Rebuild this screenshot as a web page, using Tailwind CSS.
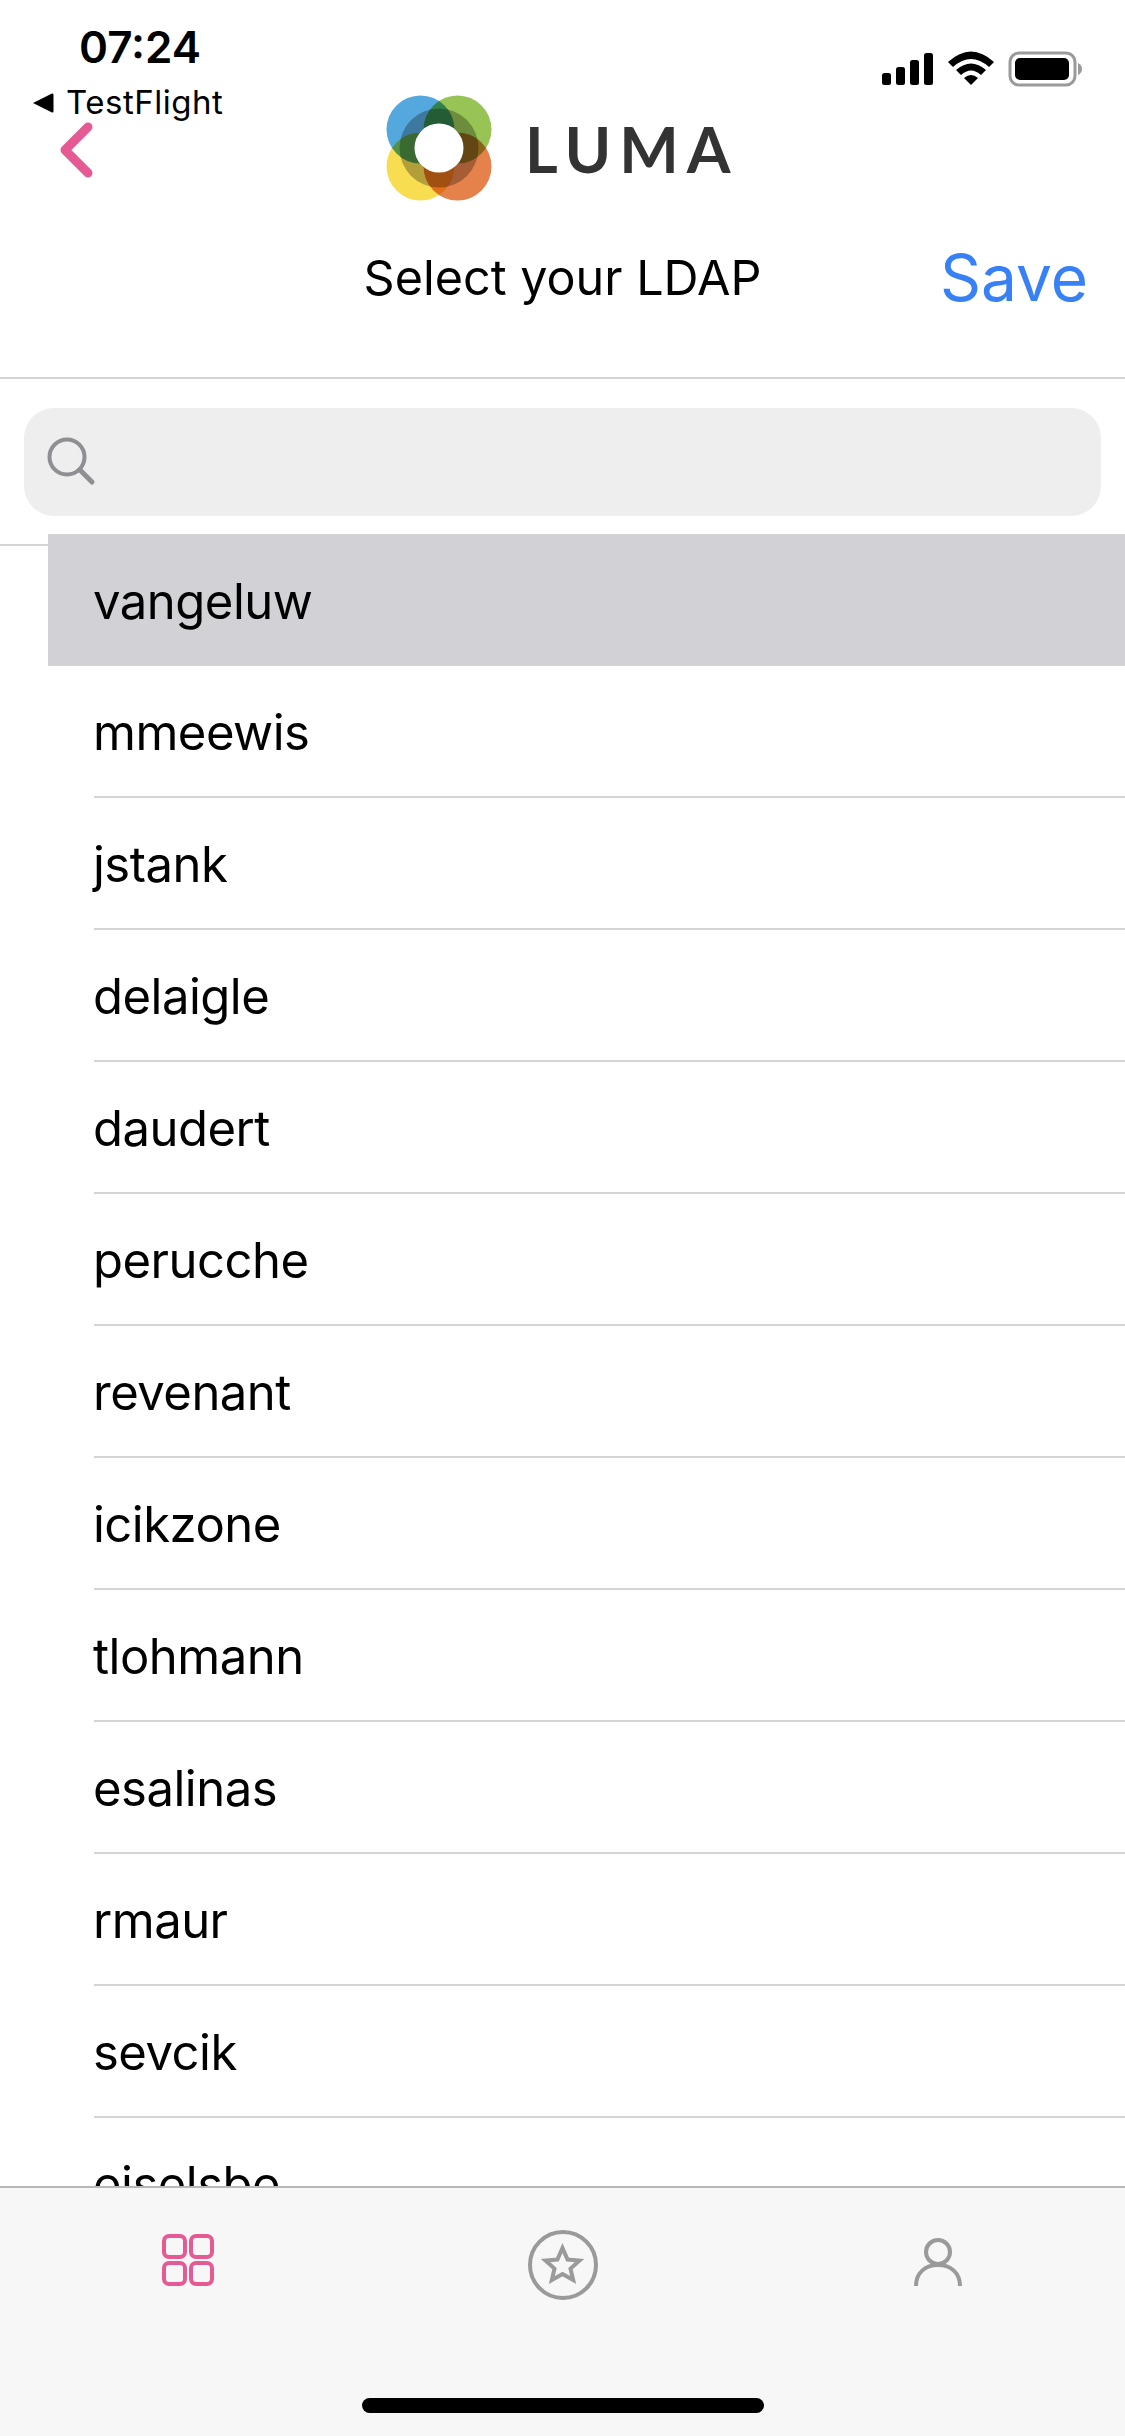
<!DOCTYPE html>
<html lang="en">
<head>
    <meta charset="UTF-8">
    <meta name="viewport" content="width=device-width, initial-scale=1.0">
    <title>Select your LDAP</title>
    <script src="https://cdn.jsdelivr.net/npm/@tailwindcss/browser@4"></script>
</head>
<body class="bg-white font-['Inter',sans-serif] text-black">
    <div class="relative w-[1125px] h-[2436px] flex flex-col overflow-hidden">

        <!-- status bar -->
        <div class="absolute top-0 left-0 w-full h-[120px]">
            <span class="absolute left-[79px] top-[20px] text-[44px] leading-[54px] font-semibold">07:24</span>
            <svg class="absolute left-[32px] top-[92px]" width="22" height="22" viewBox="0 0 22 22"><path d="M1 11 L20 1.5 Q21.5 1 21.5 3 V19 Q21.5 21 20 20.5 Z" fill="#000"/></svg>
            <span class="absolute left-[66px] top-[82px] text-[33px] leading-[40px] tracking-[0.5px]">TestFlight</span>
            <svg class="absolute left-[880px] top-[50px]" width="205" height="38" viewBox="880 50 205 38">
                <rect x="882" y="73" width="9" height="12" rx="2.5"/>
                <rect x="896" y="67" width="9" height="18" rx="2.5"/>
                <rect x="910" y="60" width="9" height="25" rx="2.5"/>
                <rect x="924" y="53" width="9" height="32" rx="2.5"/>
                <path d="M948 62 Q971 41 994 62 L989 67 Q971 51 953 67 Z"/>
                <path d="M956 70 Q971 57 986 70 L981 75 Q971 66 961 75 Z"/>
                <path d="M964 78 Q971 72 978 78 L971 85 Z"/>
                <rect x="1010" y="53" width="65" height="32" rx="9" fill="none" stroke="#9a9a9a" stroke-width="3"/>
                <rect x="1015" y="58" width="54" height="22" rx="5"/>
                <path d="M1078 63 Q1082 65 1082 69 Q1082 73 1078 75 Z" fill="#9a9a9a"/>
            </svg>
        </div>

        <!-- header -->
        <header class="relative h-[379px] shrink-0 border-b-2 border-[#d4d4d6]">
            <svg class="absolute left-[58px] top-[120px]" width="40" height="60" viewBox="58 120 40 60" fill="none"><path d="M88 127 L65 150 L88 173" stroke="#e55a93" stroke-width="9" stroke-linecap="round" stroke-linejoin="round"/></svg>
            <div class="pt-[94px] pl-[385px] flex items-center gap-[32px]">
                <svg width="108" height="108" viewBox="385.5 96 108 108" class="isolate shrink-0">
                    <circle cx="421" cy="131.5" r="34" fill="#55a8dd" class="mix-blend-multiply"/>
                    <circle cx="458" cy="131.5" r="34" fill="#97c455" class="mix-blend-multiply"/>
                    <circle cx="421" cy="168.5" r="34" fill="#f9dd50" class="mix-blend-multiply"/>
                    <circle cx="458" cy="168.5" r="34" fill="#e5814b" class="mix-blend-multiply"/>
                    <circle cx="439.5" cy="150" r="39.5" fill="#000" fill-opacity="0.28"/>
                    <circle cx="439.5" cy="150" r="24.5" fill="#fff"/>
                </svg>
                <span class="font-['Lato',sans-serif] font-bold text-[63px] leading-none tracking-[8px] text-[#333333]">LUMA</span>
            </div>
            <h1 class="absolute left-0 top-[246px] w-full text-center text-[48.5px] leading-[64px]">Select your LDAP</h1>
            <span class="absolute right-[37px] top-[238px] text-[64px] leading-[80px] text-[#3880f5]">Save</span>
        </header>

        <!-- search -->
        <div class="h-[167px] shrink-0 border-b-2 border-[#d4d4d6] px-[24px] pt-[29px]">
            <div class="h-[108px] rounded-[30px] bg-[#eeeeee] flex items-center pl-[22px]">
                <svg width="50" height="50" viewBox="0 0 50 50" fill="none" stroke="#8e8e93" stroke-width="4"><circle cx="21" cy="20" r="17.5"/><path d="M34 33 L46 45" stroke-width="5" stroke-linecap="round"/></svg>
            </div>
        </div>

        <!-- list -->
        <ul class="relative -mt-[12px] ml-[48px] flex-1 overflow-hidden text-[49px] tracking-[-0.5px] indent-[-1px]">
            <li class="pl-[46px] bg-[#d1d1d6]"><div class="h-[132px] pt-[3px] flex items-center">vangeluw</div></li>
            <li class="pl-[46px]"><div class="h-[132px] pt-[3px] flex items-center border-b-2 border-[#d4d4d6]">mmeewis</div></li>
            <li class="pl-[46px]"><div class="h-[132px] pt-[3px] flex items-center border-b-2 border-[#d4d4d6]">jstank</div></li>
            <li class="pl-[46px]"><div class="h-[132px] pt-[3px] flex items-center border-b-2 border-[#d4d4d6]">delaigle</div></li>
            <li class="pl-[46px]"><div class="h-[132px] pt-[3px] flex items-center border-b-2 border-[#d4d4d6]">daudert</div></li>
            <li class="pl-[46px]"><div class="h-[132px] pt-[3px] flex items-center border-b-2 border-[#d4d4d6]">perucche</div></li>
            <li class="pl-[46px]"><div class="h-[132px] pt-[3px] flex items-center border-b-2 border-[#d4d4d6]">revenant</div></li>
            <li class="pl-[46px]"><div class="h-[132px] pt-[3px] flex items-center border-b-2 border-[#d4d4d6]">icikzone</div></li>
            <li class="pl-[46px]"><div class="h-[132px] pt-[3px] flex items-center border-b-2 border-[#d4d4d6]">tlohmann</div></li>
            <li class="pl-[46px]"><div class="h-[132px] pt-[3px] flex items-center border-b-2 border-[#d4d4d6]">esalinas</div></li>
            <li class="pl-[46px]"><div class="h-[132px] pt-[3px] flex items-center border-b-2 border-[#d4d4d6]">rmaur</div></li>
            <li class="pl-[46px]"><div class="h-[132px] pt-[3px] flex items-center border-b-2 border-[#d4d4d6]">sevcik</div></li>
            <li class="pl-[46px]"><div class="h-[132px] pt-[3px] flex items-center border-b-2 border-[#d4d4d6]">eiselsbe</div></li>
        </ul>

        <!-- tab bar -->
        <nav class="relative h-[250px] shrink-0 border-t-2 border-[#b8b8b8] bg-[#f7f7f7] grid grid-cols-3 justify-items-center items-start pt-[45px]">
            <svg width="54" height="54" viewBox="0 0 54 54" fill="none" stroke="#e55a93" stroke-width="4">
                <rect x="3" y="3" width="21" height="21" rx="5"/><rect x="30" y="3" width="21" height="21" rx="5"/>
                <rect x="3" y="30" width="21" height="21" rx="5"/><rect x="30" y="30" width="21" height="21" rx="5"/>
            </svg>
            <svg class="-mt-[4px]" width="72" height="72" viewBox="0 0 72 72" fill="none" stroke="#9a9a9a" stroke-width="4">
                <circle cx="36" cy="36" r="33"/>
                <path d="M35.500 19 L40.600 30.500 L52.500 31.600 L43.500 39.600 L46.200 51 L35.500 45 L24.800 51 L27.500 39.600 L18.500 31.600 L30.400 30.500 Z"/>
            </svg>
            <svg class="mt-[2px]" width="54" height="60" viewBox="0 0 54 60" fill="none" stroke="#9a9a9a" stroke-width="4">
                <circle cx="27" cy="17" r="12"/>
                <path d="M5 51 C5 38 14 30 27 30 C40 30 49 38 49 51"/>
            </svg>
            <div class="absolute left-[362px] top-[210px] w-[402px] h-[15px] rounded-full bg-black"></div>
        </nav>
    </div>
</body>
</html>
